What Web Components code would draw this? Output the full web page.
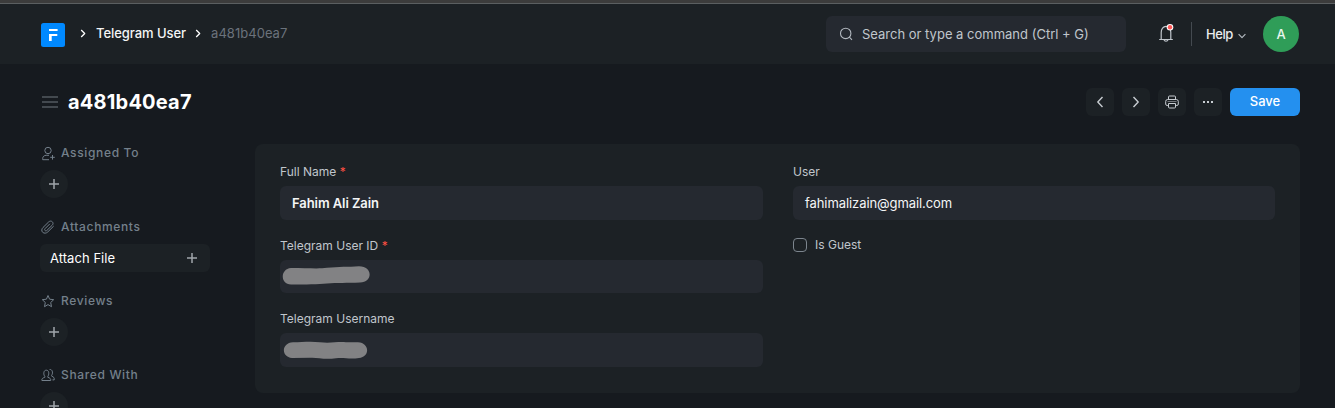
<!DOCTYPE html>
<html lang="en">
<head>
<meta charset="utf-8">
<title>Telegram User</title>
<style>
html,body{margin:0;height:100%;overflow:hidden;background:#161a1f}
body{font-family:Inter,"Liberation Sans",sans-serif;font-size:13px;color:#fff}
</style>
</head>
<body>
<desk-page>
  <nav-bar slot="nav"></nav-bar>
  <page-head slot="head" heading="a481b40ea7"></page-head>
  <side-bar slot="side">
    <side-section icon="assign" label="Assigned To"></side-section>
    <side-section icon="clip" label="Attachments" action="Attach File"></side-section>
    <side-section icon="star" label="Reviews"></side-section>
    <side-section icon="users" label="Shared With"></side-section>
  </side-bar>
  <form-card>
    <form-field label="Full Name" required strong>Fahim Ali Zain</form-field>
    <form-field label="Telegram User ID" required><redacted-mark shape="a"></redacted-mark></form-field>
    <form-field label="Telegram Username"><redacted-mark shape="b"></redacted-mark></form-field>
    <form-field slot="right" label="User">fahimalizain@gmail.com</form-field>
    <check-field slot="right">Is Guest</check-field>
  </form-card>
</desk-page>
<script>
const define = (name, render) => customElements.define(name, class extends HTMLElement {
  connectedCallback() {
    if (this.shadowRoot) return;
    const t = document.createElement('template');
    t.innerHTML = render(this);
    this.attachShadow({ mode: 'open' }).append(t.content.cloneNode(true));
  }
});

const icons = {
  logo: [24, 24, '<rect width="24" height="24" rx="2.5" fill="#0089ff" stroke="none"/><path d="M8 6h8.600v2H8zM8 11h8.300v2.100h-5.600V18H8z" fill="#fff" stroke="none"/>'],
  right: [6, 9, '<path d="M1.200 1l3.500 3.500L1.200 8" stroke-width="1.300"/>'],
  search: [14, 14, '<circle cx="6.700" cy="6.400" r="5.200" stroke-width="1.100"/><path d="M10.400 10.200l2.600 2.600" stroke-width="1.100"/>'],
  bell: [16, 20, '<path d="M1.200 16.500h13.600M3.200 16.300V9.500C3.200 6.100 5.200 3.400 8 3.400s4.800 2.700 4.800 6.100v6.800M5.900 16.600c.3 1 1.100 1.600 2.100 1.600s1.800-.6 2.100-1.600" stroke-width="1.200"/><circle cx="12" cy="4.200" r="3.300" fill="#fff" stroke="none"/><circle cx="12" cy="4.200" r="2.200" fill="#ff5858" stroke="none"/>'],
  down: [8, 6, '<path d="M.6 1.200L4 4.600l3.400-3.400" stroke-width="1.200"/>'],
  menu: [16, 14, '<path d="M0 2h16M0 7h16M0 12h16" stroke-width="1.600"/>'],
  prev: [12, 12, '<path d="M8.500 1L3.800 6l4.700 5" stroke-width="1.400"/>'],
  next: [12, 12, '<path d="M3.500 1L8.200 6l-4.700 5" stroke-width="1.400"/>'],
  print: [14, 14, '<path d="M3.500 4.500v-2.500a1 1 0 0 1 1-1h5a1 1 0 0 1 1 1v2.500M3.500 10.500H2.200A1.500 1.500 0 0 1 .7 9V6.500a2 2 0 0 1 2-2h8.600a2 2 0 0 1 2 2V9a1.500 1.500 0 0 1-1.500 1.500h-1.300M3.500 8.500v3.500a1 1 0 0 0 1 1h5a1 1 0 0 0 1-1V8.500z"/><path d="M2.500 6.500h9" opacity=".5"/>'],
  dots: [12, 4, '<path d="M1 1h2v2H1zM5 1h2v2H5zM9 1h2v2H9z" fill="currentColor" stroke="none"/>'],
  plus: [12, 12, '<path d="M6 1v10M1 6h10" stroke-width="1.500"/>'],
  assign: [14, 15, '<circle cx="7" cy="4.500" r="3.200"/><path d="M8 13.700H1.700v-1.200c0-1.900 1.500-3.200 3.500-3.200h2.800M11.500 9v4.600M9.200 11.300h4.600"/>'],
  clip: [14, 14, '<path d="M12.700 6.100l-5.900 5.800c-1.500 1.500-3.700 1.700-5.100.4s-1.100-3.400.3-4.800l5.600-5.500c1.100-1.100 2.700-1.200 3.700-.2s.9 2.400-.1 3.400L5.900 10.400c-.6.6-1.400.6-1.900.1s-.5-1.300.1-1.900l4.800-4.800"/>'],
  star: [14, 14, '<path d="M7 1.500l1.600 3.700 4.100.5-3 2.800.8 4.200L7 10.600l-3.500 2.100.8-4.200-3-2.800 4.100-.5z"/>'],
  users: [14, 14, '<path d="M.9 12.500c-.3-1.700.7-2.500 2.900-3.200.3-.5 0-.9-.4-1.500-1-1.900-.9-5.600 1.900-5.600s2.900 3.700 1.900 5.600c-.4.600-.6 1-.4 1.500 2.200.7 3.200 1.500 2.900 3.200zM8.600 1.500c2.700-.4 3.500 3.100 2.400 5.200-.4.700-.6 1-.3 1.500 2 .7 2.800 1.600 2.500 3.700h-1.700"/>'],
  a: [89, 20, '<path d="M10 2C26 2 38 3 46 1.800C58 .7 67 1 78 .3C92 .3 92 16 79 16.500C66 17 56 16.800 46 17.500C37 18.600 25 18.400 10 18.500C-1 18-1 3 10 2z" fill="#828284" stroke="none"/>'],
  b: [86, 20, '<path d="M11 2.300C20 2.300 28 1 38 2.300C49 3.400 56 1.500 64 2.300L76 2.300C88 3 88 17 77 18C67 19.500 62 17.200 54 18.300C41 19.800 36 17.300 28 17.800L10 18C-1 17-1 3 11 2.300z" fill="#828284" stroke="none"/>']
};
define('ui-icon', e => {
  const [w, h, body] = icons[e.getAttribute('name')];
  return `<style>:host{display:block;flex:none;width:${w}px;height:${h}px}svg{display:block}</style>
  <svg width="${w}" height="${h}" viewBox="0 0 ${w} ${h}" fill="none" stroke="currentColor" stroke-linecap="butt" stroke-linejoin="round">${body}</svg>`;
});

define('desk-page', () => `<style>
:host{display:flex;flex-direction:column;height:408px;overflow:hidden}
.strip{height:3px;background:#3c3c3c;border-bottom:1px solid #5b5f61;flex:none}
main{display:grid;grid-template-columns:170px 1045px;column-gap:45px;padding:0 35px 0 40px;align-items:start}
</style><div class="strip"></div><slot name="nav"></slot><slot name="head"></slot>
<main><slot name="side"></slot><slot></slot></main>`);

define('nav-bar', () => `<style>
:host{display:flex;height:60px;flex:none;align-items:center;padding:0 36px 0 41px;background:#1c2125}
.crumbs{display:flex;align-items:center;margin-top:-2px;flex:1;letter-spacing:-.05px}
.crumbs ui-icon[name=logo]{margin-top:3px}
.crumbs ui-icon[name=right]{margin:1px 10px 0 15px}
.crumbs span+ui-icon[name=right]{margin:1px 10px 0 9px}
b{font-weight:500;color:#f4f5f6}
.here{color:#6b727c;letter-spacing:.03px}
.search{box-sizing:border-box;width:300px;height:36px;border-radius:6px;background:#252930;color:#c0c6cc;display:flex;align-items:center;gap:9px;padding-left:13px;font-size:13px;margin-right:32px}
.search ui-icon{color:#b2b8bf}
.bell{color:#c0c6cc;margin:-2px 17px 0 0}
.rule{width:1px;height:24px;background:#444a50;margin-right:14px}
.help{display:flex;align-items:center;gap:5px;font-weight:500;color:#e9ebed;margin-right:17px;letter-spacing:-.4px}
.help ui-icon{color:#b2b8bf;margin-top:3px}
.avatar{width:36px;height:36px;border-radius:50%;background:#2f9d58;color:#e9f6ee;display:grid;place-items:center;font-weight:500;font-size:13px}
</style>
<div class="crumbs"><ui-icon name="logo"></ui-icon><ui-icon name="right"></ui-icon><span><b>Telegram User</b></span><ui-icon name="right"></ui-icon><span class="here">a481b40ea7</span></div>
<div class="search"><ui-icon name="search"></ui-icon><span>Search or type a command (Ctrl + G)</span></div>
<ui-icon class="bell" name="bell"></ui-icon><div class="rule"></div>
<div class="help"><span>Help</span><ui-icon name="down"></ui-icon></div><div class="avatar">A</div>`);

define('page-head', e => `<style>
:host{display:flex;height:80px;box-sizing:border-box;padding:0 35px 4px 42px;align-items:center;flex:none}
.menu{color:#535960;margin-right:10px}
h1{font-size:20px;line-height:28px;font-weight:700;margin:0;flex:1;letter-spacing:.2px}
.tools{display:flex;gap:8px;color:#c7ccd1}
.btn{width:28px;height:28px;border-radius:6px;background:#1c2125;display:grid;place-items:center}
.save{width:70px;background:#2490ef;color:#fff;font-weight:500;box-sizing:border-box;padding-bottom:2px}
</style><ui-icon class="menu" name="menu"></ui-icon><h1>${e.getAttribute('heading')}</h1>
<div class="tools">${['prev', 'next', 'print', 'dots'].map(n => `<div class="btn"><ui-icon name="${n}"></ui-icon></div>`).join('')}<div class="btn save">Save</div></div>`);

define('side-bar', () => `<style>:host{display:flex;flex-direction:column}</style><slot></slot>`);
define('side-section', e => `<style>
:host{display:block;height:74px}
.label{display:flex;align-items:center;gap:6px;height:18px;padding-left:1px;color:#74808b;letter-spacing:.65px;font-size:12px;font-weight:500}
.label span{margin-top:-2px}
.add{margin-top:8px;width:28px;height:28px;border-radius:50%;background:#1c2125;display:flex;align-items:center;justify-content:center;color:#a0a5aa}
.wide{width:170px;box-sizing:border-box;border-radius:6px;justify-content:space-between;padding:0 12px 0 10px}
.wide span{color:#fff;letter-spacing:.05px}
</style><div class="label"><ui-icon name="${e.getAttribute('icon')}"></ui-icon><span>${e.getAttribute('label')}</span></div>
${e.hasAttribute('action') ? `<div class="add wide"><span>${e.getAttribute('action')}</span><ui-icon name="plus"></ui-icon></div>` : '<div class="add"><ui-icon name="plus"></ui-icon></div>'}`);

define('form-card', () => `<style>
:host{display:grid;grid-template-columns:483px 482px;column-gap:30px;box-sizing:border-box;height:249px;padding:19px 25px;background:#1c2125;border-radius:8px}
</style><div><slot></slot></div><div><slot name="right"></slot></div>`);
define('form-field', e => `<style>
:host{display:block;height:73.6px}
label{display:block;height:23px;line-height:18px;font-size:12px;color:#c0c6cc}
i{color:#ff5043;font-style:normal}
.box{height:33.6px;border-radius:6px;background:#252930;box-sizing:border-box;padding-left:12px;display:flex;align-items:center;color:#f4f5f6;font-size:13px;letter-spacing:-.08px;font-weight:${e.hasAttribute('strong') ? 600 : 400}}
</style><label>${e.getAttribute('label')}${e.hasAttribute('required') ? ' <i>*</i>' : ''}</label><div class="box"><slot></slot></div>`);
define('check-field', () => `<style>
:host{display:flex;align-items:center;gap:8px;height:18px;margin-top:-1px;font-size:12px;color:#c0c6cc}
.check{width:12px;height:12px;border:1px solid #7c858e;border-radius:4px}
</style><div class="check"></div><slot></slot>`);
define('redacted-mark', e => `<style>:host{display:block;margin:${e.getAttribute('shape') === 'a' ? '0 0 0 -11px' : '0 0 0 -10px'}}</style><ui-icon name="${e.getAttribute('shape')}"></ui-icon>`);
</script>
</body>
</html>
